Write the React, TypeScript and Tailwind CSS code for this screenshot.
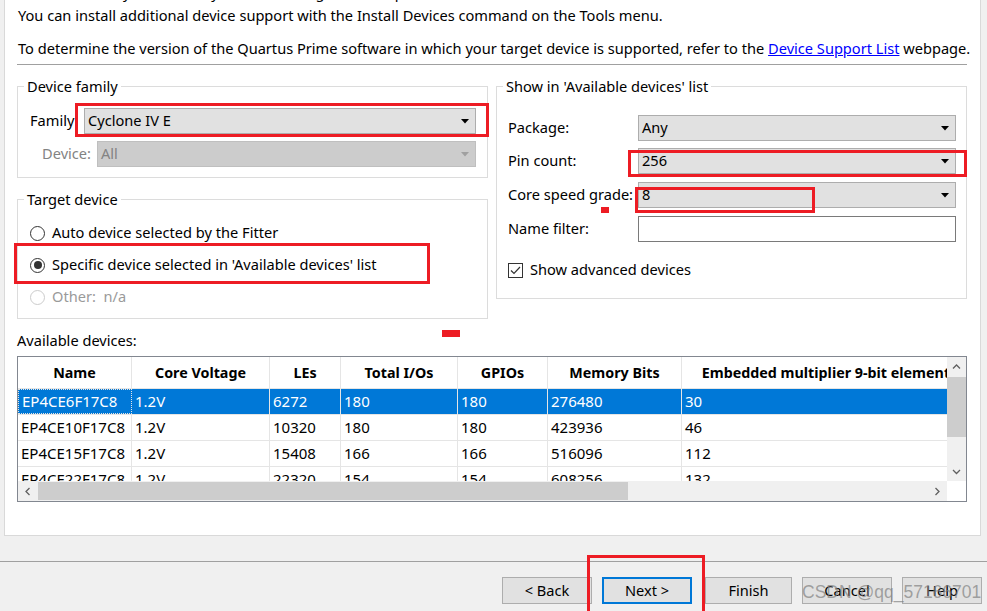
import React from "react";

const rows = [
  ["EP4CE6F17C8", "1.2V", "6272", "180", "180", "276480", "30"],
  ["EP4CE10F17C8", "1.2V", "10320", "180", "180", "423936", "46"],
  ["EP4CE15F17C8", "1.2V", "15408", "166", "166", "516096", "112"],
  ["EP4CE22F17C8", "1.2V", "22320", "154", "154", "608256", "132"],
];

const columns = [
  { title: "Name", width: "w-[114px]" },
  { title: "Core Voltage", width: "w-[138px]" },
  { title: "LEs", width: "w-[71px]" },
  { title: "Total I/Os", width: "w-[117px]" },
  { title: "GPIOs", width: "w-[90px]" },
  { title: "Memory Bits", width: "w-[134px]" },
  { title: "Embedded multiplier 9-bit elements", width: "w-[296px]" },
];

function Arrow({ disabled }: { disabled?: boolean }) {
  return (
    <svg width="8" height="5" viewBox="0 0 8 5" className="shrink-0">
      <polygon points="0,0 8,0 4,4.5" fill={disabled ? "#a0a0a0" : "#000"} />
    </svg>
  );
}

function Combo({ value, width, disabled }: { value: string; width: string; disabled?: boolean }) {
  return (
    <div
      className={`flex h-[26px] ${width} items-center justify-between border pl-[3px] pr-[6px] ${
        disabled ? "border-[#bfbfbf] bg-[#cccccc] text-[#838383]" : "border-[#adadad] bg-[#e1e1e1]"
      }`}
    >
      <span>{value}</span>
      <Arrow disabled={disabled} />
    </div>
  );
}

function Radio({ checked, disabled, label }: { checked?: boolean; disabled?: boolean; label: string }) {
  return (
    <div className={`flex h-[32px] items-center gap-[7px] ${disabled ? "text-[#9a9a9a]" : ""}`}>
      <span
        className={`flex h-[15px] w-[15px] items-center justify-center rounded-full border bg-white ${
          disabled ? "border-[#cccccc]" : "border-[#333333]"
        }`}
      >
        {checked ? <span className="h-[8px] w-[8px] rounded-full bg-[#333333]" /> : null}
      </span>
      <span className="whitespace-pre">{label}</span>
    </div>
  );
}

function Chevron({ dir }: { dir: "left" | "right" | "up" | "down" }) {
  const d = {
    left: "M5.5 1 L2 4.5 L5.5 8",
    right: "M2.5 1 L6 4.5 L2.5 8",
    up: "M1 5.5 L4.5 2 L8 5.5",
    down: "M1 3 L4.5 6.5 L8 3",
  }[dir];
  return (
    <svg width="9" height="9" viewBox="0 0 9 9">
      <path d={d} fill="none" stroke="#606060" strokeWidth="1.3" />
    </svg>
  );
}

function RedBox({ className }: { className: string }) {
  return <div className={`pointer-events-none absolute border-[3px] border-[#ed1c24] ${className}`} />;
}

export default function App() {
  return (
    <div className="relative h-[611px] w-[987px] overflow-hidden bg-[#f0f0f0] font-['Noto_Sans',sans-serif] text-[14.6px] text-black">
      <div className="ml-[4px] h-[536px] w-[977px] overflow-hidden border-x border-b border-[#d9d9d9] bg-white pl-[12px] pr-[13px]">
        <div className="-mt-[15px] whitespace-nowrap pl-px leading-[20px]">
          <p className="h-[20px] leading-[15px]">Select the family and device you want to target for compilation.</p>
          <p>You can install additional device support with the Install Devices command on the Tools menu.</p>
          <p className="mt-[13px]">
            To determine the version of the Quartus Prime software in which your target device is supported, refer to the{" "}
            <span className="text-[#0000ff] underline">Device Support List</span> webpage.
          </p>
        </div>
        <div className="mt-[6px] h-px bg-[#a0a0a0]" />

        <div className="mt-[12px] flex gap-[8px]">
          <div className="w-[471px]">
            <fieldset className="border border-[#dcdcdc] pb-[10px] pl-[12px] pr-[11px] pt-[13px]">
              <legend className="-ml-[6px] px-[3px] leading-[18px]">Device family</legend>
              <div className="flex items-center">
                <span className="w-[54px]">Family:</span>
                <Combo value="Cyclone IV E" width="w-[392px]" />
              </div>
              <div className="mt-[7px] flex items-center">
                <span className="w-[67px] pr-[6px] text-right text-[#838383]">Device:</span>
                <Combo value="All" width="w-[379px]" disabled />
              </div>
            </fieldset>

            <fieldset className="mt-[12px] border border-[#dcdcdc] pb-[5px] pl-[12px] pt-[9px]">
              <legend className="-ml-[6px] px-[3px] leading-[18px]">Target device</legend>
              <Radio label="Auto device selected by the Fitter" />
              <Radio checked label="Specific device selected in 'Available devices' list" />
              <Radio disabled label="Other:  n/a" />
            </fieldset>
          </div>

          <fieldset className="h-fit w-[471px] border border-[#dcdcdc] pb-[18px] pl-[11px] pr-[10px] pt-[20px]">
            <legend className="-ml-[5px] px-[3px] leading-[18px]">Show in 'Available devices' list</legend>
            <div className="flex items-center">
              <span className="w-[130px]">Package:</span>
              <Combo value="Any" width="w-[318px]" />
            </div>
            <div className="mt-[7px] flex items-center">
              <span className="w-[130px]">Pin count:</span>
              <Combo value="256" width="w-[318px]" />
            </div>
            <div className="mt-[8px] flex items-center">
              <span className="w-[130px] whitespace-nowrap">Core speed grade:</span>
              <Combo value="8" width="w-[318px]" />
            </div>
            <div className="mt-[8px] flex items-center">
              <span className="w-[130px]">Name filter:</span>
              <div className="h-[26px] w-[318px] border border-[#7a7a7a] bg-white" />
            </div>
            <div className="mt-[18px] flex h-[20px] items-center gap-[7px]">
              <span className="flex h-[15px] w-[15px] items-center justify-center border border-[#333333] bg-white">
                <svg width="11" height="9" viewBox="0 0 11 9">
                  <path d="M1 4.5 L4 7.5 L10 1" fill="none" stroke="#333" strokeWidth="1.2" />
                </svg>
              </span>
              <span>Show advanced devices</span>
            </div>
          </fieldset>
        </div>

        <p className="mt-[11px] leading-[20px]">Available devices:</p>

        <div className="mt-[6px] h-[146px] w-[950px] border border-[#828790] bg-white text-[15px]">
          <div className="flex h-[124px]">
            <div className="w-[929px] overflow-hidden">
              <div className="flex h-[32px] w-max border-b border-[#e5e5e5] text-[14.3px] font-bold">
                {columns.map((c) => (
                  <div
                    key={c.title}
                    className={`${c.width} flex shrink-0 items-center justify-center whitespace-nowrap border-r border-[#e5e5e5]`}
                  >
                    {c.title}
                  </div>
                ))}
              </div>
              {rows.map((row, i) => (
                <div
                  key={row[0]}
                  className={`flex h-[26px] w-max border-b border-[#e5e5e5] ${i === 0 ? "bg-[#0078d7] text-white" : ""}`}
                >
                  {row.map((cell, j) => (
                    <div
                      key={j}
                      className={`${columns[j].width} flex shrink-0 items-center whitespace-nowrap border-r border-[#e5e5e5] pl-[3px] ${
                        i === 0 && j === 0 ? "border border-dotted border-[#e0a060]" : ""
                      }`}
                    >
                      {cell}
                    </div>
                  ))}
                </div>
              ))}
            </div>
            <div className="flex w-[19px] flex-col items-center bg-[#f0f0f0]">
              <div className="flex h-[20px] items-center">
                <Chevron dir="up" />
              </div>
              <div className="h-[60px] w-full bg-[#cdcdcd]" />
              <div className="flex-1" />
              <div className="flex h-[20px] items-center">
                <Chevron dir="down" />
              </div>
            </div>
          </div>
          <div className="flex h-[20px]">
            <div className="flex w-[929px] items-center bg-[#f0f0f0]">
              <div className="flex w-[20px] justify-center">
                <Chevron dir="left" />
              </div>
              <div className="h-[18px] w-[590px] bg-[#cdcdcd]" />
              <div className="flex-1" />
              <div className="flex w-[20px] justify-center">
                <Chevron dir="right" />
              </div>
            </div>
            <div className="w-[19px] bg-white" />
          </div>
        </div>
      </div>

      <div className="mt-[25px] h-px bg-[#a0a0a0]" />

      <div className="mt-[15px] flex pl-[502px]">
        <button className="h-[27px] w-[90px] border border-[#adadad] bg-[#e1e1e1]">&lt; Back</button>
        <button className="ml-[10px] h-[27px] w-[90px] border-2 border-[#0078d7] bg-[#e1e1e1]">Next &gt;</button>
        <button className="ml-[13px] h-[27px] w-[87px] border border-[#adadad] bg-[#e1e1e1]">Finish</button>
        <button className="ml-[10px] h-[27px] w-[90px] border border-[#adadad] bg-[#e1e1e1]">Cancel</button>
        <button className="ml-[10px] h-[27px] w-[80px] border border-[#adadad] bg-[#e1e1e1]">Help</button>
      </div>

      <RedBox className="left-[75px] top-[103px] h-[34px] w-[414px]" />
      <RedBox className="left-[14px] top-[243px] h-[41px] w-[416px]" />
      <RedBox className="left-[628px] top-[150px] h-[27px] w-[339px]" />
      <RedBox className="left-[635px] top-[187px] h-[26px] w-[180px]" />
      <RedBox className="left-[587px] top-[555px] h-[60px] w-[118px]" />
      <div className="absolute left-[442px] top-[330px] h-[7px] w-[18px] bg-[#ed1c24]" />
      <div className="absolute left-[601px] top-[207px] h-[6px] w-[8px] bg-[#ed1c24]" />

      <div className="pointer-events-none absolute left-[802px] top-[580px] whitespace-nowrap font-['Liberation_Sans',sans-serif] text-[17.5px] leading-[24px] text-[#808080]/70">
        CSDN @qq_57166701
      </div>
    </div>
  );
}
